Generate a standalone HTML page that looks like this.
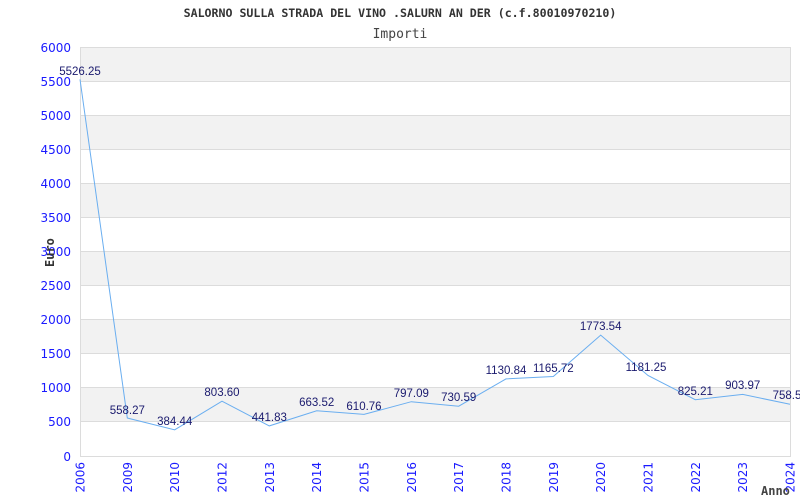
<!DOCTYPE html>
<html><head><meta charset="utf-8"><style>html,body{margin:0;padding:0;background:#fff}svg{display:block}</style></head>
<body>
<svg width="800" height="500" xmlns="http://www.w3.org/2000/svg">
<rect width="800" height="500" fill="#fff"/>
<g fill="#f2f2f2">
<rect x="80" y="47" width="710" height="34"/>
<rect x="80" y="115" width="710" height="34"/>
<rect x="80" y="183" width="710" height="34"/>
<rect x="80" y="251" width="710" height="35"/>
<rect x="80" y="320" width="710" height="34"/>
<rect x="80" y="388" width="710" height="34"/>
</g>
<g stroke="#dcdcdc" stroke-width="1">
<line x1="80" y1="47.5" x2="790" y2="47.5"/><line x1="80" y1="81.5" x2="790" y2="81.5"/><line x1="80" y1="115.5" x2="790" y2="115.5"/><line x1="80" y1="149.5" x2="790" y2="149.5"/><line x1="80" y1="183.5" x2="790" y2="183.5"/><line x1="80" y1="217.5" x2="790" y2="217.5"/><line x1="80" y1="251.5" x2="790" y2="251.5"/><line x1="80" y1="285.5" x2="790" y2="285.5"/><line x1="80" y1="319.5" x2="790" y2="319.5"/><line x1="80" y1="353.5" x2="790" y2="353.5"/><line x1="80" y1="387.5" x2="790" y2="387.5"/><line x1="80" y1="421.5" x2="790" y2="421.5"/><line x1="80" y1="456.5" x2="790" y2="456.5"/>
<line x1="80.5" y1="47" x2="80.5" y2="457"/><line x1="790.5" y1="47" x2="790.5" y2="457"/>
</g>
<text x="400" y="17" text-anchor="middle" font-family="'DejaVu Sans Mono','Liberation Mono',monospace" font-size="11.6" font-weight="bold" fill="#333">SALORNO SULLA STRADA DEL VINO .SALURN AN DER (c.f.80010970210)</text>
<text x="400" y="38" text-anchor="middle" font-family="'DejaVu Sans Mono','Liberation Mono',monospace" font-size="13" fill="#444">Importi</text>
<g font-family="'DejaVu Sans',sans-serif" font-size="12" fill="#1a1aff" text-anchor="end">
<text x="71" y="52">6000</text><text x="71" y="86">5500</text><text x="71" y="120">5000</text><text x="71" y="154">4500</text><text x="71" y="188">4000</text><text x="71" y="222">3500</text><text x="71" y="256">3000</text><text x="71" y="290">2500</text><text x="71" y="324">2000</text><text x="71" y="358">1500</text><text x="71" y="392">1000</text><text x="71" y="426">500</text><text x="71" y="461">0</text>
</g>
<text transform="translate(54,267) rotate(-90)" font-family="'DejaVu Sans Mono',monospace" font-size="12" font-weight="bold" fill="#333">Euro</text>
<g font-family="'DejaVu Sans',sans-serif" font-size="12" fill="#1a1aff" text-anchor="end">
<text transform="translate(84.5,462) rotate(-90)">2006</text>
<text transform="translate(131.8,462) rotate(-90)">2009</text>
<text transform="translate(179.2,462) rotate(-90)">2010</text>
<text transform="translate(226.5,462) rotate(-90)">2012</text>
<text transform="translate(273.8,462) rotate(-90)">2013</text>
<text transform="translate(321.2,462) rotate(-90)">2014</text>
<text transform="translate(368.5,462) rotate(-90)">2015</text>
<text transform="translate(415.8,462) rotate(-90)">2016</text>
<text transform="translate(463.2,462) rotate(-90)">2017</text>
<text transform="translate(510.5,462) rotate(-90)">2018</text>
<text transform="translate(557.8,462) rotate(-90)">2019</text>
<text transform="translate(605.2,462) rotate(-90)">2020</text>
<text transform="translate(652.5,462) rotate(-90)">2021</text>
<text transform="translate(699.8,462) rotate(-90)">2022</text>
<text transform="translate(747.2,462) rotate(-90)">2023</text>
<text transform="translate(794.5,462) rotate(-90)">2024</text>
</g>
<text x="761" y="495" font-family="'DejaVu Sans Mono',monospace" font-size="12" font-weight="bold" fill="#444">Anno</text>
<polyline fill="none" stroke="#6aaef0" stroke-width="1" points="80,79.3 127.3,418 174.7,429.8 222,401.2 269.3,425.9 316.7,410.8 364,414.4 411.3,401.7 458.7,406.2 506,378.9 553.3,376.5 600.7,335.1 648,375.5 695.3,399.7 742.7,394.4 790,404.3"/>
<g font-family="'Liberation Sans',sans-serif" font-size="11.5" fill="#1a1a6e" text-anchor="middle">
<text x="80" y="75">5526.25</text>
<text x="127.3" y="414">558.27</text>
<text x="174.7" y="425">384.44</text>
<text x="222" y="396">803.60</text>
<text x="269.3" y="421">441.83</text>
<text x="316.7" y="406">663.52</text>
<text x="364" y="410">610.76</text>
<text x="411.3" y="397">797.09</text>
<text x="458.7" y="401">730.59</text>
<text x="506" y="374">1130.84</text>
<text x="553.3" y="372">1165.72</text>
<text x="600.7" y="330">1773.54</text>
<text x="646" y="371">1181.25</text>
<text x="695.3" y="395">825.21</text>
<text x="742.7" y="389">903.97</text>
<text x="787" y="399">758.5</text>
</g>
</svg>
</body></html>
